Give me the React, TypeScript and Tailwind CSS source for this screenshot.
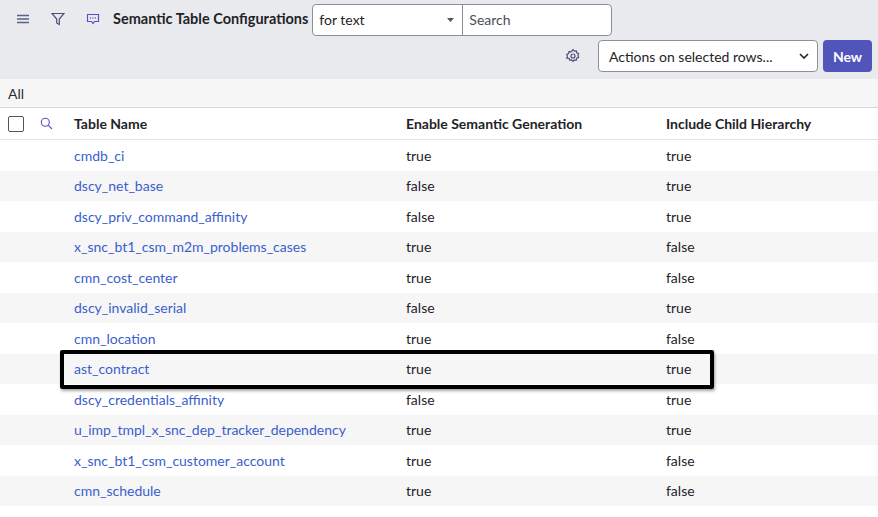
import React from "react";

const rows: [string, string, string][] = [
  ["cmdb_ci", "true", "true"],
  ["dscy_net_base", "false", "true"],
  ["dscy_priv_command_affinity", "false", "true"],
  ["x_snc_bt1_csm_m2m_problems_cases", "true", "false"],
  ["cmn_cost_center", "true", "false"],
  ["dscy_invalid_serial", "false", "true"],
  ["cmn_location", "true", "false"],
  ["ast_contract", "true", "true"],
  ["dscy_credentials_affinity", "false", "true"],
  ["u_imp_tmpl_x_snc_dep_tracker_dependency", "true", "true"],
  ["x_snc_bt1_csm_customer_account", "true", "false"],
  ["cmn_schedule", "true", "false"],
];

export default function App() {
  return (
    <div className="w-[878px] h-[517px] overflow-hidden bg-white text-[14px] text-[#1f2328]" style={{ fontFamily: "Lato, 'Open Sans', sans-serif" }}>
      <div className="bg-[#e9eaee] h-[79px] relative">
        <div className="flex items-center h-[38px] pl-[17px]">
          <svg width="12" height="10" viewBox="0 0 12 10" className="text-[#5a5f8a]"><path d="M0 1.5h12M0 5h12M0 8.5h12" stroke="currentColor" strokeWidth="1.3" /></svg>
          <svg width="14" height="14" viewBox="0 0 14 14" className="ml-[22px]" fill="none" stroke="#4a4f7a" strokeWidth="1.2"><path d="M1 1.5h12L8.3 7v5.5L5.7 11V7z" /></svg>
          <svg width="14" height="14" viewBox="0 0 14 14" className="ml-[21px]" fill="none" stroke="#5b4fc0" strokeWidth="1.2"><path d="M1.5 2.5h11v7h-4L7 11.5 5.5 9.5h-4z" /><circle cx="4.6" cy="6" r=".7" fill="#5b4fc0" stroke="none"/><circle cx="7" cy="6" r=".7" fill="#5b4fc0" stroke="none"/><circle cx="9.4" cy="6" r=".7" fill="#5b4fc0" stroke="none"/></svg>
          <span className="ml-[13px] font-bold text-[14.5px] text-[#1f2328]">Semantic Table Configurations</span>
          <div className="ml-[4px] flex h-[32px] mt-[1px] border border-[#8a8f98] rounded-[4px] bg-white">
            <div className="w-[150px] flex items-center justify-between pl-[6px] pr-[8px] border-r border-[#8a8f98]">
              <span>for text</span>
              <svg width="7" height="4" viewBox="0 0 7 4"><path d="M0 0h7L3.5 4z" fill="#555" /></svg>
            </div>
            <div className="w-[148px] flex items-center pl-[6px] text-[#4a4f57]">Search</div>
          </div>
        </div>
        <div className="absolute right-[6px] top-[40px] flex items-center">
          <svg width="16" height="16" viewBox="0 0 24 24" fill="none" stroke="#4a4f7a" strokeWidth="1.8" className="mr-[17px]"><circle cx="12" cy="12" r="3" /><path d="M12 2.5l2 2.2 3-.4.7 2.9 2.7 1.3-1 2.8 1 2.8-2.7 1.3-.7 2.9-3-.4-2 2.2-2-2.2-3 .4-.7-2.9L2.6 15.3l1-2.8-1-2.8 2.7-1.3.7-2.9 3 .4z" /></svg>
          <div className="w-[220px] h-[32px] border border-[#8a8f98] rounded-[4px] bg-white flex items-center justify-between pl-[10px] pr-[8px]">
            <span>Actions on selected rows...</span>
            <svg width="10" height="6" viewBox="0 0 10 6"><path d="M1 1l4 4 4-4" stroke="#222" strokeWidth="1.6" fill="none" /></svg>
          </div>
          <div className="ml-[5px] w-[49px] h-[32px] rounded-[4px] bg-[#5154b8] text-white font-bold flex items-center justify-center">New</div>
        </div>
      </div>
      <div className="h-[29px] bg-[#f7f7f8] border-b border-[#d8d8dc] flex items-center pl-[8px] text-[#2a2e33]">All</div>
      <div className="h-[32px] flex items-center border-b border-[#e3e3e6] font-bold">
        <div className="w-[16px] h-[16px] border border-[#555] rounded-[2px] ml-[8px]" />
        <svg width="13" height="13" viewBox="0 0 13 13" fill="none" stroke="#5b4fc0" strokeWidth="1.1" className="ml-[16px]"><circle cx="5.3" cy="5.3" r="4" /><path d="M8.3 8.3L12 12" /></svg>
        <span className="ml-[21px] w-[332px]">Table Name</span>
        <span className="w-[260px]">Enable Semantic Generation</span>
        <span>Include Child Hierarchy</span>
      </div>
      {rows.map((r, i) => (
        <div key={i} className={`h-[30.5px] flex items-center relative ${i === 7 ? "z-10" : ""} ${i % 2 ? "bg-[#f6f6f7]" : "bg-white"}`}>
          <span className="ml-[74px] w-[332px] text-[#3a5fcd]">{r[0]}</span>
          <span className="w-[260px]">{r[1]}</span>
          <span>{r[2]}</span>
          {i === 7 && <div className="absolute left-[60px] top-[-4px] w-[654px] h-[39px] border-[4px] border-black rounded-[2px] shadow-[1px_2px_3px_rgba(0,0,0,0.35)]" />}
        </div>
      ))}
    </div>
  );
}
